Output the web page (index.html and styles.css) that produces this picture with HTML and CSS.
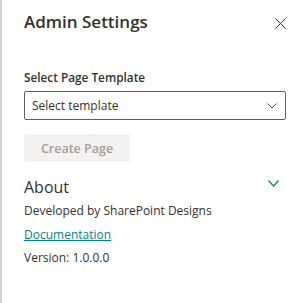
FILE: index.html
```html
<!DOCTYPE html>
<html lang="en">
<head>
  <meta charset="UTF-8">
  <title>Admin Settings</title>
  <link rel="stylesheet" href="styles.css">
</head>
<body>
  <div class="panel">
    <div class="panel-header">
      <h1 class="panel-title">Admin Settings</h1>
      <button class="close-btn" aria-label="Close">
        <svg width="11" height="11" viewBox="0 0 11 11">
          <path d="M0.5 0.5 L10.5 10.5 M10.5 0.5 L0.5 10.5" stroke="#323130" stroke-width="1" fill="none"/>
        </svg>
      </button>
    </div>

    <div class="field">
      <label class="field-label">Select Page Template</label>
      <div class="dropdown">
        <span class="dropdown-text">Select template</span>
        <svg class="dropdown-caret" width="10" height="6" viewBox="0 0 10 6">
          <path d="M0.5 0.5 L5 5 L9.5 0.5" stroke="#605e5c" stroke-width="1" fill="none"/>
        </svg>
      </div>
    </div>

    <button class="create-btn" disabled>Create Page</button>

    <div class="about">
      <div class="about-header">
        <h2 class="about-title">About</h2>
        <svg class="about-caret" width="11" height="7" viewBox="0 0 11 7">
          <path d="M0.5 0.5 L5.5 6 L10.5 0.5" stroke="#038387" stroke-width="1.2" fill="none"/>
        </svg>
      </div>
      <p class="about-line">Developed by SharePoint Designs</p>
      <p class="about-line"><a href="#" class="doc-link">Documentation</a></p>
      <p class="about-line">Version: 1.0.0.0</p>
    </div>
  </div>
</body>
</html>
```

FILE: styles.css
```css
body {
    margin: 0;
    background-color: #ffffff;
    font-family: 'Open Sans', 'Noto Sans', sans-serif;
    color: #323130;
}

.panel {
    border-left: 2px solid #d4d4d4;
    height: 303px;
    box-sizing: border-box;
    padding: 0 21px 0 22px;
}

.panel-header {
    display: flex;
    justify-content: space-between;
    align-items: center;
    padding-top: 9px;
}

.panel-title {
    margin: 0;
    font-size: 17px;
    font-weight: 600;
    line-height: 26px;
}

.close-btn {
    background: none;
    border: none;
    padding: 0;
    margin-top: 2px;
    display: flex;
}

.field {
    margin-top: 33px;
}

.field-label {
    display: block;
    font-size: 11.8px;
    font-weight: 600;
    line-height: 18px;
    margin-bottom: 5px;
}

.dropdown {
    height: 29px;
    box-sizing: border-box;
    border: 1px solid #605e5c;
    border-radius: 2px;
    display: flex;
    align-items: center;
    justify-content: space-between;
    padding: 0 8px 0 7px;
}

.dropdown-text {
    font-size: 12px;
}

.create-btn {
    margin-top: 14px;
    width: 106px;
    height: 28px;
    border: none;
    border-radius: 2px;
    background-color: #f3f2f1;
    color: #a19f9d;
    font-family: inherit;
    font-size: 12.5px;
    font-weight: 600;
}

.about {
    margin-top: 13px;
}

.about-header {
    display: flex;
    justify-content: space-between;
    align-items: flex-start;
    padding-right: 7px;
}

.about-title {
    margin: 0;
    font-size: 16px;
    font-weight: 400;
    line-height: 24px;
}

.about-caret {
    margin-top: 5px;
}

.about-line {
    margin: 0;
    font-size: 12px;
    line-height: 23.5px;
}

.doc-link {
    color: #038387;
}
```
